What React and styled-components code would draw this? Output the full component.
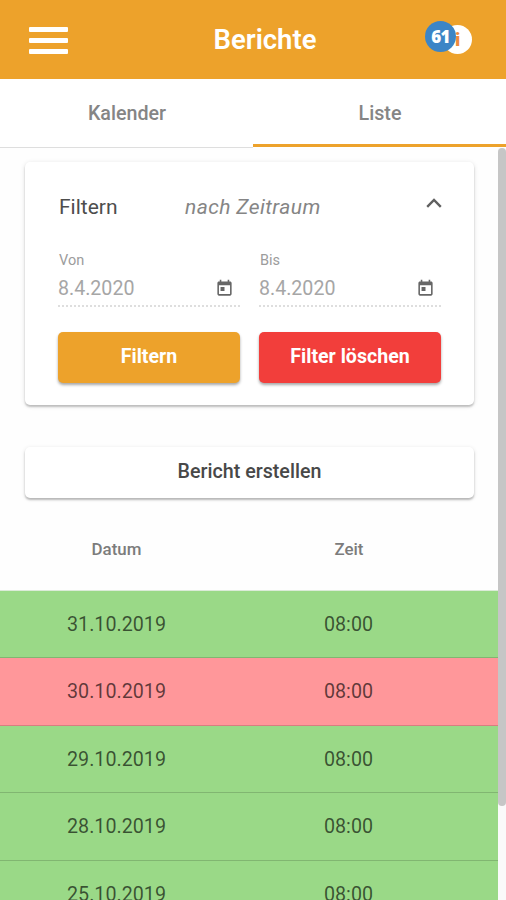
import React from "react";
import styled, { createGlobalStyle } from "styled-components";

const reports = [
  { date: "31.10.2019", time: "08:00" },
  { date: "30.10.2019", time: "08:00", missing: true },
  { date: "29.10.2019", time: "08:00" },
  { date: "28.10.2019", time: "08:00" },
  { date: "25.10.2019", time: "08:00" },
];

const DateField = ({ label, value }) => (
  <StField>
    <StFieldLabel>{label}</StFieldLabel>
    <StFieldRow>
      <span>{value}</span>
      <StCalendarIcon viewBox="0 0 24 24">
        <path d="M19 3h-1V1h-2v2H8V1H6v2H5c-1.11 0-1.99.9-1.99 2L3 19c0 1.1.89 2 2 2h14c1.1 0 2-.9 2-2V5c0-1.1-.9-2-2-2zm0 16H5V8h14v11zM7 10h5v5H7z" />
      </StCalendarIcon>
    </StFieldRow>
  </StField>
);

const App = () => {
  return (
    <>
      <GlobalStyle />
      <StPage>
        <StHeader>
          <StMenuBtn aria-label="Menü">
            <i />
            <i />
            <i />
          </StMenuBtn>
          <StTitle>Berichte</StTitle>
          <StInfo>
            <StInfoCircle>i</StInfoCircle>
            <StBadge>61</StBadge>
          </StInfo>
        </StHeader>
        <StTabs>
          <StTab>Kalender</StTab>
          <StTab $active>Liste</StTab>
        </StTabs>
        <StBody>
          <StContent>
            <StFilterCard>
              <StFilterHead>
                <StFilterTitle>Filtern</StFilterTitle>
                <StFilterHint>nach Zeitraum</StFilterHint>
                <StChevron viewBox="0 0 16 10">
                  <path d="M1.2 8.8 8 2l6.8 6.8" />
                </StChevron>
              </StFilterHead>
              <StFilterGrid>
                <DateField label="Von" value="8.4.2020" />
                <DateField label="Bis" value="8.4.2020" />
                <StFilterBtn $color="#eda22b">Filtern</StFilterBtn>
                <StFilterBtn $color="#f23e3b">Filter löschen</StFilterBtn>
              </StFilterGrid>
            </StFilterCard>
            <StCreateBtn>Bericht erstellen</StCreateBtn>
            <StTableHead>
              <span>Datum</span>
              <span>Zeit</span>
            </StTableHead>
            {reports.map((report) => (
              <StRow key={report.date} $missing={report.missing}>
                <span>{report.date}</span>
                <span>{report.time}</span>
              </StRow>
            ))}
          </StContent>
          <StScrollbar>
            <StThumb />
          </StScrollbar>
        </StBody>
      </StPage>
    </>
  );
};

export default App;

const GlobalStyle = createGlobalStyle`
  * {
    box-sizing: border-box;
  }
  body {
    margin: 0;
    overflow: hidden;
    background-color: #fff;
    font-family: Roboto, "Liberation Sans", sans-serif;
  }
  button {
    padding: 0;
    border: none;
    font-family: inherit;
    cursor: pointer;
  }
`;

const StPage = styled.div`
  display: flex;
  flex-direction: column;
  width: 506px;
  height: 900px;
  overflow: hidden;
`;

const StHeader = styled.header`
  display: grid;
  grid-template-columns: 120px 1fr 120px;
  align-items: center;
  flex: none;
  height: 79px;
  padding: 0 29px;
  background-color: #eda22b;
`;

const StMenuBtn = styled.button`
  display: flex;
  flex-direction: column;
  gap: 6px;
  width: 39px;
  margin-top: 1px;
  background-color: transparent;

  i {
    height: 5px;
    border-radius: 1px;
    background-color: #fff;
  }
`;

const StTitle = styled.h1`
  margin: 0;
  padding: 1px 0 0 24px;
  color: #fff;
  font-size: 27.5px;
  font-weight: 600;
  line-height: 36px;
  text-align: center;
  white-space: nowrap;
`;

const StInfo = styled.div`
  position: relative;
  justify-self: end;
  margin-right: 5px;
`;

const StInfoCircle = styled.div`
  display: flex;
  justify-content: center;
  align-items: center;
  width: 29px;
  height: 29px;
  border-radius: 50%;
  background-color: #fff;
  color: #ee8a3c;
  font-size: 19px;
  font-weight: 900;
`;

const StBadge = styled.div`
  position: absolute;
  top: -4px;
  left: -18px;
  width: 31px;
  height: 31px;
  border-radius: 50%;
  background-color: #3c85c6;
  color: #fff;
  font-family: "Open Sans", sans-serif;
  font-size: 17px;
  font-weight: 800;
  letter-spacing: -0.8px;
  line-height: 31px;
  text-align: center;
`;

const StTabs = styled.nav`
  display: flex;
  flex: none;
  height: 69px;
`;

const StTab = styled.div`
  display: flex;
  justify-content: center;
  align-items: center;
  flex: 1;
  height: ${(props) => (props.$active ? "68px" : "69px")};
  padding: ${(props) => (props.$active ? "4px 0 0 1px" : "0 0 0 1px")};
  border-bottom: ${(props) =>
    props.$active ? "3px solid #eda22b" : "1px solid #dedede"};
  color: #858585;
  font-size: 19.7px;
  font-weight: 500;
`;

const StBody = styled.div`
  display: flex;
  flex: 1;
  min-height: 0;
`;

const StContent = styled.main`
  display: flex;
  flex-direction: column;
  width: 498px;
  overflow: hidden;
  background-color: #fefefe;
`;

const StFilterCard = styled.section`
  flex: none;
  height: 243px;
  margin: 14px 24px 0 25px;
  padding: 30px 33px 0;
  border-radius: 5px;
  background-color: #fff;
  box-shadow: 0 2px 2px rgba(0, 0, 0, 0.2), 0 1px 5px rgba(0, 0, 0, 0.12);
`;

const StFilterHead = styled.div`
  display: flex;
  height: 30px;
  line-height: 30px;
`;

const StFilterTitle = styled.span`
  width: 127px;
  padding-left: 1px;
  color: #4d4d4d;
  font-size: 21px;
`;

const StFilterHint = styled.span`
  flex: 1;
  color: #858585;
  font-size: 21px;
  font-style: italic;
  letter-spacing: 0.4px;
`;

const StChevron = styled.svg`
  width: 16px;
  height: 10px;
  margin: 6px -1px 0 0;
  fill: none;
  stroke: #606060;
  stroke-width: 2.4;
`;

const StFilterGrid = styled.div`
  display: grid;
  grid-template-columns: 182px 182px;
  column-gap: 19px;
  row-gap: 25px;
  margin-top: 29px;
`;

const StField = styled.div`
  height: 56px;
  border-bottom: 2px dotted #dedede;
`;

const StFieldLabel = styled.div`
  padding: 1px;
  color: #9c9c9c;
  font-size: 14.5px;
  line-height: 17px;
`;

const StFieldRow = styled.div`
  display: flex;
  justify-content: space-between;
  align-items: center;
  height: 36px;
  padding-right: 6px;
  color: #a6a6a6;
  font-size: 19.6px;
`;

const StCalendarIcon = styled.svg`
  width: 19px;
  height: 19px;
  fill: #666;
`;

const StFilterBtn = styled.button`
  height: 51px;
  padding-bottom: 2px;
  border-radius: 5px;
  background-color: ${(props) => props.$color};
  box-shadow: 0 2px 3px rgba(0, 0, 0, 0.35);
  color: #fff;
  font-size: 19.6px;
  font-weight: 700;
`;

const StCreateBtn = styled.button`
  flex: none;
  height: 51px;
  margin: 42px 24px 0 25px;
  padding-bottom: 2px;
  border-radius: 5px;
  background-color: #fff;
  box-shadow: 0 2px 2px rgba(0, 0, 0, 0.22), 0 1px 4px rgba(0, 0, 0, 0.12);
  color: #484848;
  font-size: 19.7px;
  font-weight: 500;
`;

const StTableHead = styled.div`
  display: grid;
  grid-template-columns: 233px 232px;
  align-items: center;
  flex: none;
  height: 92.5px;
  padding-top: 11px;
  border-bottom: 1px solid #dcebd8;
  color: #7c7c7c;
  font-size: 16.9px;
  font-weight: 500;
  text-align: center;
`;

const StRow = styled.div`
  display: grid;
  grid-template-columns: 233px 231px;
  align-items: center;
  flex: none;
  height: 67.5px;
  padding-top: 1px;
  border-bottom: 1px solid rgba(0, 0, 0, 0.16);
  background-color: ${(props) => (props.$missing ? "#ff979a" : "#9ad987")};
  background-clip: border-box;
  color: rgba(0, 0, 0, 0.63);
  font-size: 19.7px;
  text-align: center;
`;

const StScrollbar = styled.div`
  width: 8px;
  background-color: #fafafa;
`;

const StThumb = styled.div`
  height: 658px;
  border-radius: 4px;
  background-color: #c6c6c6;
`;
